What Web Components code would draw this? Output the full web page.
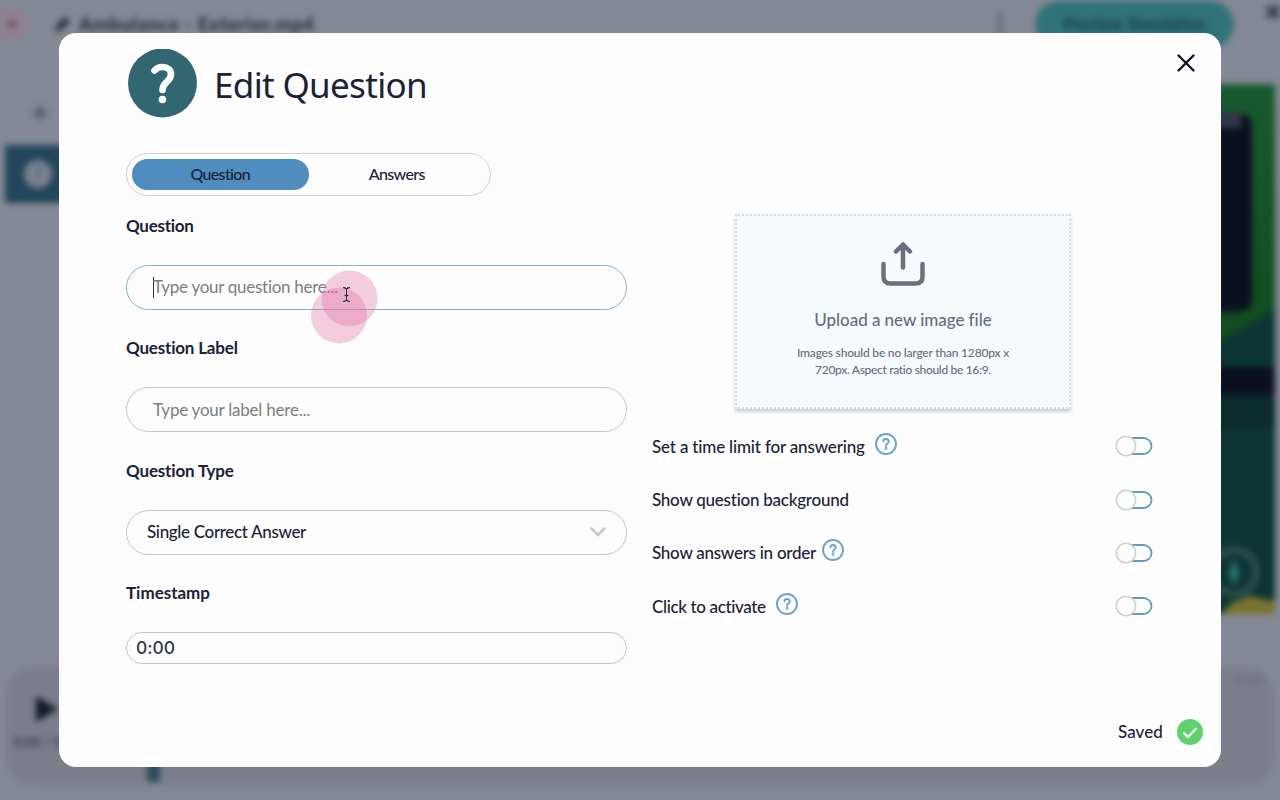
<!DOCTYPE html>
<html lang="en">
<head>
<meta charset="utf-8">
<title>Edit Question</title>
<style>
  body {
    margin: 0;
    width: 1280px;
    height: 800px;
    overflow: hidden;
    position: relative;
    background: #858995;
    color: #1c2236;
    font: 500 17px/24px Lato, "Open Sans", sans-serif;
  }
</style>
</head>
<body>
<editor-backdrop></editor-backdrop>
<question-modal>
  <tab-switch slot="tabs"></tab-switch>
  <form-field slot="fields" label="Question" label-width="68" kind="focused"><fit-text width="185">Type your question here...</fit-text></form-field>
  <form-field slot="fields" label="Question Label" label-width="112"><fit-text width="157">Type your label here...</fit-text></form-field>
  <form-field slot="fields" label="Question Type" label-width="108" kind="select"><fit-text width="159">Single Correct Answer</fit-text></form-field>
  <form-field slot="fields" label="Timestamp" label-width="84" kind="short"><fit-text width="39">0:00</fit-text></form-field>
  <upload-zone slot="side"></upload-zone>
  <toggle-row slot="rows" help="10"><fit-text width="213">Set a time limit for answering</fit-text></toggle-row>
  <toggle-row slot="rows"><fit-text width="197">Show question background</fit-text></toggle-row>
  <toggle-row slot="rows" help="6"><fit-text width="164">Show answers in order</fit-text></toggle-row>
  <toggle-row slot="rows" help="10"><fit-text width="114">Click to activate</fit-text></toggle-row>
</question-modal>
<click-pointer></click-pointer>

<script>
// every element here only needs a template in an open shadow root
class BaseElement extends HTMLElement {
  connectedCallback() {
    if (this.shadowRoot) return;
    this.attachShadow({ mode: "open" }).innerHTML = this.template();
  }
}

/**
 * Text tracked to fill a given width
 *
 * @element fit-text
 * @prop {Number} width The width in pixels
 */
class FitText extends BaseElement {
  template() {
    return `
      <style>
        :host { display: inline-block; white-space: nowrap; flex: none; }
      </style>
      <slot></slot>`;
  }
  connectedCallback() {
    super.connectedCallback();
    const width = Number(this.getAttribute("width"));
    const natural = this.getBoundingClientRect().width;
    const spacing = (width - natural) / this.textContent.length;
    this.style.letterSpacing = spacing.toFixed(3) + "px";
  }
}

// The editor that sits dimmed behind the modal
class EditorBackdrop extends BaseElement {
  template() {
    return `
      <style>
        :host { display: flex; flex-direction: column; height: 800px; box-sizing: border-box;
          padding: 0 7px 15px 5px; filter: blur(3px); color: #2b2f3a; }
        header { display: flex; height: 48px; align-items: center; }
        .dot { width: 34px; height: 34px; margin-left: -10px; border-radius: 50%;
          background: radial-gradient(circle, #6a5667 12%, #957e8d 24%, #8f8290 60%, #858995 72%); }
        .pencil { margin: 0 7px 0 25px; }
        .name { font-weight: 900; font-size: 19px; }
        .more { margin-left: auto; margin-right: 31px; }
        .preview { width: 199px; height: 47px; border-radius: 24px; background: #307477;
          display: flex; align-items: center; justify-content: center; color: #17404d; font-weight: 900; font-size: 16px; }
        .close { margin: -24px -9px 0 30px; }
        main { display: flex; height: 570px; justify-content: space-between; align-items: flex-start; }
        .plus { display: block; margin: 57px 0 24px 27px; }
        .item { width: 80px; height: 58px; background: #23465b; display: flex; align-items: center; }
        .item span { width: 28px; height: 28px; margin-left: 19px; border-radius: 50%; background: #7b8290;
          color: #505c6b; text-align: center; font-weight: 900; line-height: 28px; }
        .scene { margin-top: 36px; margin-right: -2px; }
        footer { margin: 49px 0 0 2px; height: 118px; border-radius: 24px; background: #7b7e8a; display: flex;
          flex-direction: column; box-sizing: border-box; padding: 10px 8px 0 6px; }
        .total { align-self: flex-end; width: 28px; height: 6px; margin-bottom: 12px; background: #6f737f; }
        .play { margin-left: 22px; }
        .time { margin-top: 9px; color: #434854; font-size: 14px; font-weight: 900; line-height: 20px; }
        .mark { width: 13px; height: 20px; background: #294b5e; margin: 10px 0 0 134px; }
      </style>
      <header>
        <span class="dot"></span>
        <svg class="pencil" width="18" height="18" viewBox="0 0 18 18"><path d="M1 17l1.500-6L11 2l5 4-9 9z" fill="#222630"/></svg>
        <span class="name"><fit-text width="236">Ambulance - Exterior.mp4</fit-text></span>
        <svg class="more" width="8" height="26" viewBox="0 0 8 26" fill="#5a5f6b"><circle cx="4" cy="4" r="3"/><circle cx="4" cy="13" r="3"/><circle cx="4" cy="22" r="3"/></svg>
        <div class="preview"><fit-text width="144">Preview Simulation</fit-text></div>
        <svg class="close" width="18" height="18" viewBox="0 0 18 18" stroke="#353945" stroke-width="4.500"><path d="M3 3l12 12M15 3L3 15"/></svg>
      </header>
      <main>
        <div>
          <svg class="plus" width="16" height="16" viewBox="0 0 16 16" stroke="#57616e" stroke-width="5"><path d="M8 1v14M1 8h14"/></svg>
          <div class="item"><span>?</span></div>
        </div>
        <svg class="scene" width="90" height="530" viewBox="0 0 90 530">
          <defs><linearGradient id="g" x1="0" y1="0" x2="0" y2="1"><stop offset="0" stop-color="#185b31"/><stop offset="1" stop-color="#114a1d"/></linearGradient></defs>
          <path fill="#0d3534" d="M0 0h90v530H0z"/>
          <path fill="url(#g)" d="M0 0h90v225L36 257 0 280z"/>
          <path fill="#0b1020" d="M0 30h55q12 0 12 12v174q0 10-14 12H0z"/>
          <path fill="#303748" d="M0 28h50q6 0 6 6v10H0z"/>
          <path fill="#0c101e" d="M0 283h90v28H0z"/>
          <path fill="#0b2b2d" d="M0 311h90v34H0z"/>
          <circle cx="49" cy="488" r="22" fill="none" stroke="#31534f" stroke-width="6"/>
          <path fill="#277069" d="M49 475l6 14-6 13-6-13z"/>
          <path fill="#77732f" d="M36 530l12-12 17-6 25 5v13z"/>
        </svg>
      </main>
      <footer>
        <span class="total"></span>
        <svg class="play" width="24" height="28" viewBox="0 0 24 28"><path d="M1 1l22 13L1 27z" fill="#141a29"/></svg>
        <div class="time">0:00 / 0:00</div>
        <div class="mark"></div>
      </footer>`;
  }
}

class QuestionModal extends BaseElement {
  template() {
    return `
      <style>
        :host { position: absolute; left: 59px; top: 33px; width: 1162px; height: 734px; box-sizing: border-box;
          display: flex; flex-direction: column; border-radius: 17px; background: #fdfdfe;
          padding: 15.500px 18px 22px 67px; }
        header { display: flex; height: 69px; align-items: center; padding-left: 2px; flex: none; }
        h1 { margin: 3px 0 0 17px; font: 400 35px/48px "Noto Sans", "Open Sans", sans-serif; }
        .close { margin: 4px 7px 0 auto; align-self: flex-start; }
        .tabs { margin-top: 35px; }
        .body { display: grid; grid-template-columns: 501px 501px; gap: 25px; margin-top: 18px; }
        .left { display: flex; flex-direction: column; gap: 26.600px; }
        .rows { display: flex; flex-direction: column; gap: 28.800px; margin-top: 26px; }
        footer { display: flex; align-items: center; justify-content: flex-end; gap: 14px; margin-top: auto; }
      </style>
      <header>
        <svg width="69" height="69" viewBox="0 0 69 69" fill="none">
          <circle cx="34.500" cy="34" r="34.500" fill="#326772"/>
          <path d="M26.500 21.500c2-2.500 4.800-3.500 8-3.500 5 0 8.500 3 8.500 7.200 0 7.800-8.500 7.300-8.500 15.800" stroke="#fff" stroke-width="6.600" stroke-linecap="round"/>
          <circle cx="34.500" cy="50.500" r="3.800" fill="#fff"/>
        </svg>
        <h1><fit-text width="213">Edit Question</fit-text></h1>
        <svg class="close" width="20" height="20" viewBox="0 0 20 20" stroke="#0e1222" stroke-width="2.400" stroke-linecap="round"><path d="M2.500 2.500l15 15M17.500 2.500l-15 15"/></svg>
      </header>
      <div class="tabs"><slot name="tabs"></slot></div>
      <div class="body">
        <div class="left"><slot name="fields"></slot></div>
        <div>
          <slot name="side"></slot>
          <div class="rows"><slot name="rows"></slot></div>
        </div>
      </div>
      <footer>
        <fit-text width="45">Saved</fit-text>
        <svg width="26" height="26" viewBox="0 0 26 26" fill="none"><circle cx="13" cy="13" r="13" fill="#61d16c"/><path d="M6.500 13.500l4.500 4.500 8.500-9" stroke="#fff" stroke-width="2"/></svg>
      </footer>`;
  }
}

class TabSwitch extends BaseElement {
  template() {
    return `
      <style>
        :host { display: flex; width: 365px; height: 43px; box-sizing: border-box; padding: 5px;
          border: 1.500px solid #cfd0d3; border-radius: 22px; font-size: 16px; }
        div { flex: 1; display: flex; align-items: center; justify-content: center; border-radius: 16px; }
        .on { background: #4f8dbf; }
      </style>
      <div class="on"><fit-text width="60">Question</fit-text></div>
      <div><fit-text width="56">Answers</fit-text></div>`;
  }
}

/**
 * @element form-field
 * @prop {String} label The text over the box
 * @prop {String} kind focused, select or short
 */
class FormField extends BaseElement {
  template() {
    const arrow = this.getAttribute("kind") === "select"
      ? `<svg width="16" height="12" viewBox="0 0 16 12" fill="none" stroke="#c5c7cb" stroke-width="2.500" stroke-linecap="round"><path d="M1.500 2.500L8 9l6.500-6.500"/></svg>`
      : "";
    return `
      <style>
        :host { display: flex; flex-direction: column; gap: 26px; }
        label { font-weight: 700; height: 25px; }
        .box { height: 45px; box-sizing: border-box; border: 1px solid #c3c5c8; border-radius: 23px;
          padding: 0 20px 0 26px; display: flex; align-items: center; color: #7b7e84; font-weight: 400; }
        .caret { width: 1px; height: 21px; margin-right: -1px; background: #2c3142; }
        :host([kind="focused"]) .box { border-color: #83b3d2; }
        :host([kind="select"]) .box { padding-left: 20px; color: #1c2236; justify-content: space-between; font-weight: 500; }
        :host([kind="short"]) .box { height: 32px; padding-left: 9px; color: #343a4c; font-size: 17.500px;
          font-family: Inter, Roboto, sans-serif; font-weight: 500; }
      </style>
      <label><fit-text width="${this.getAttribute("label-width")}">${this.getAttribute("label")}</fit-text></label>
      <div class="box">${this.getAttribute("kind") === "focused" ? '<span class="caret"></span>' : ""}<slot></slot>${arrow}</div>`;
  }
}

class UploadZone extends BaseElement {
  template() {
    return `
      <style>
        :host { display: flex; flex-direction: column; align-items: center; width: 336px; height: 195px;
          box-sizing: border-box; margin-left: 83px; padding-top: 25px; border: 2px dotted #d9dde2;
          background: #f6fafd; box-shadow: 0 3px 3px #cfd2d6; color: #686c7b; }
        .title { margin-top: 21px; }
        .note { display: flex; flex-direction: column; align-items: center; margin-top: 12px;
          font-size: 12px; line-height: 17px; }
      </style>
      <svg width="44" height="46" viewBox="0 0 44 46" fill="none" stroke="#6a6e7e" stroke-width="4.500" stroke-linecap="round" stroke-linejoin="round">
        <path d="M2.500 23v12.500q0 7 7 7h25q7 0 7-7V23M22 26.500V4M15 10.500L22 3.500l7 7"/>
      </svg>
      <div class="title"><fit-text width="177">Upload a new image file</fit-text></div>
      <div class="note">
        <fit-text width="212">Images should be no larger than 1280px x</fit-text>
        <fit-text width="176">720px. Aspect ratio should be 16:9.</fit-text>
      </div>`;
  }
}

/**
 * @element toggle-row
 * @prop {Number} help Gap before the help icon, no icon when missing
 */
class ToggleRow extends BaseElement {
  template() {
    const help = this.getAttribute("help");
    const icon = help === null ? "" : `
      <svg style="margin-left: ${help}px" class="help" width="22" height="22" viewBox="0 0 22 22" fill="none" stroke="#6ca3c9" stroke-width="1.900">
        <circle cx="11" cy="11" r="10"/>
        <path d="M8.300 8.200c.3-3 5.400-3 5.400.2 0 2.200-2.700 2-2.700 4.500" stroke-linecap="round"/>
        <circle cx="11" cy="15.500" r=".5"/>
      </svg>`;
    return `
      <style>
        :host { display: flex; align-items: center; height: 24.500px; }
        .help { margin-top: -6px; }
        .switch { margin-left: auto; margin-top: -1px; }
      </style>
      <slot></slot>${icon}
      <svg class="switch" width="38" height="22" viewBox="0 0 38 22">
        <rect x="5" y="3" width="31.500" height="16" rx="8" fill="#fff" stroke="#659abf" stroke-width="1.800"/>
        <circle cx="11" cy="11" r="9.700" fill="#fdfdfe" stroke="#cfd0d2" stroke-width="1.600"/>
      </svg>`;
  }
}

// I-beam cursor with its click highlights, floats over the form
class ClickPointer extends BaseElement {
  template() {
    return `
      <style>
        :host { position: absolute; left: 311px; top: 270px; width: 67px; height: 74px; }
      </style>
      <svg width="67" height="74" viewBox="0 0 67 74" fill="none">
        <circle cx="28" cy="45.500" r="28" fill="#df6b9f" fill-opacity=".34"/>
        <circle cx="38.500" cy="28.500" r="28" fill="#df6b9f" fill-opacity=".34"/>
        <path stroke="#fff" stroke-opacity=".7" stroke-width="2.600" d="M32 17.500q3 0 3.500 2 .5-2 3.500-2M35.500 19.500v11M32 31.500q3 0 3.500-2 .5 2 3.500 2M33.500 25.500h4"/>
        <path stroke="#30303c" stroke-width="1.300" d="M32 17.500q3 0 3.500 2 .5-2 3.500-2M35.500 19.500v11M32 31.500q3 0 3.500-2 .5 2 3.500 2M33.500 25.500h4"/>
      </svg>`;
  }
}

window.customElements.define("editor-backdrop", EditorBackdrop);
window.customElements.define("tab-switch", TabSwitch);
window.customElements.define("form-field", FormField);
window.customElements.define("upload-zone", UploadZone);
window.customElements.define("toggle-row", ToggleRow);
window.customElements.define("question-modal", QuestionModal);
window.customElements.define("click-pointer", ClickPointer);
// last, it measures with the fonts that the others set
window.customElements.define("fit-text", FitText);
</script>
</body>
</html>
